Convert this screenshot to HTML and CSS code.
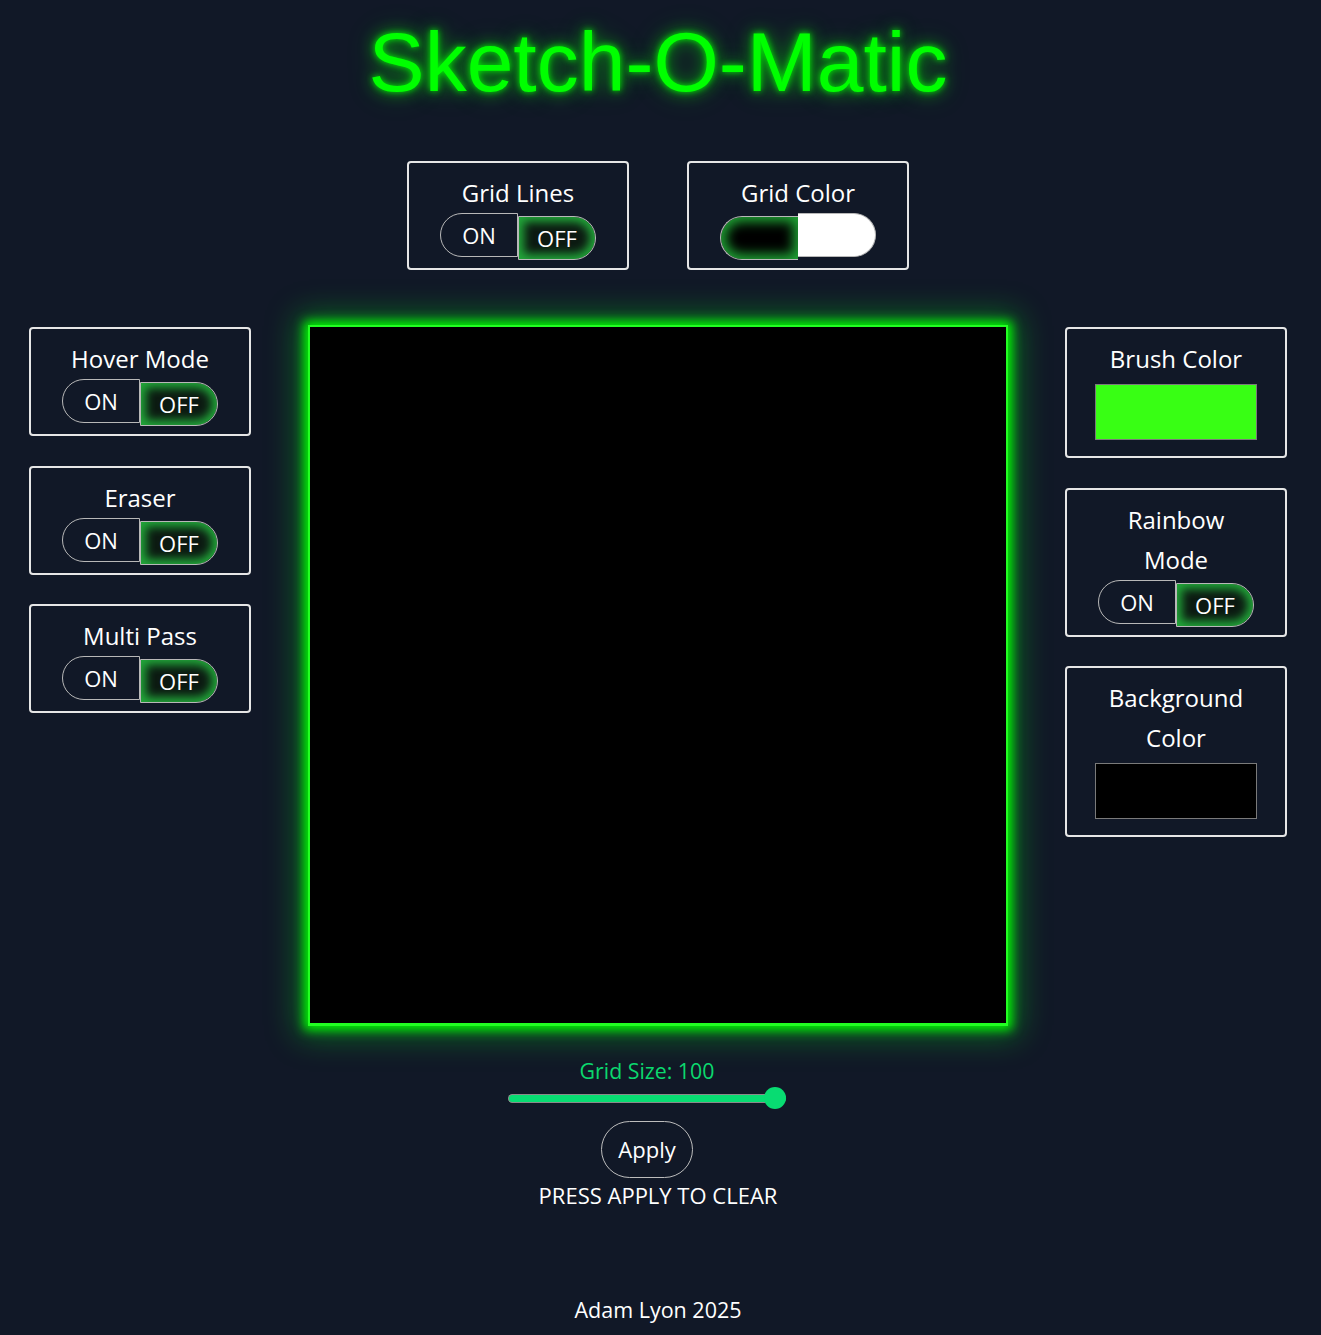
FILE: index.html
```html
<!DOCTYPE html>
<html lang="en">
<head>
<meta charset="utf-8">
<title>Sketch-O-Matic</title>
<link rel="stylesheet" href="styles.css">
</head>
<body>
  <h1 class="title">Sketch-O-Matic</h1>

  <div class="top-controls">
    <div class="panel">
      <div class="panel-title">Grid Lines</div>
      <div class="toggle">
        <div class="tbtn left">ON</div>
        <div class="tbtn right active">OFF</div>
      </div>
    </div>
    <div class="panel">
      <div class="panel-title">Grid Color</div>
      <div class="toggle">
        <div class="tbtn left active swatch-black"></div>
        <div class="tbtn right swatch-white"></div>
      </div>
    </div>
  </div>

  <div class="main">
    <div class="side-col">
      <div class="panel">
        <div class="panel-title">Hover Mode</div>
        <div class="toggle">
          <div class="tbtn left">ON</div>
          <div class="tbtn right active">OFF</div>
        </div>
      </div>
      <div class="panel">
        <div class="panel-title">Eraser</div>
        <div class="toggle">
          <div class="tbtn left">ON</div>
          <div class="tbtn right active">OFF</div>
        </div>
      </div>
      <div class="panel">
        <div class="panel-title">Multi Pass</div>
        <div class="toggle">
          <div class="tbtn left">ON</div>
          <div class="tbtn right active">OFF</div>
        </div>
      </div>
    </div>

    <div class="canvas"></div>

    <div class="side-col">
      <div class="panel">
        <div class="panel-title">Brush Color</div>
        <div class="color-swatch brush"></div>
      </div>
      <div class="panel">
        <div class="panel-title">Rainbow<br>Mode</div>
        <div class="toggle">
          <div class="tbtn left">ON</div>
          <div class="tbtn right active">OFF</div>
        </div>
      </div>
      <div class="panel">
        <div class="panel-title">Background<br>Color</div>
        <div class="color-swatch bg"></div>
      </div>
    </div>
  </div>

  <div class="controls">
    <div class="size-group">
      <div class="size-label">Grid Size: 100</div>
      <div class="slider">
        <div class="slider-track"></div>
        <div class="slider-thumb"></div>
      </div>
      <div class="apply-btn">Apply</div>
    </div>
    <div class="hint">PRESS APPLY TO CLEAR</div>
  </div>

  <footer class="footer">Adam Lyon 2025</footer>
</body>
</html>
```

FILE: styles.css
```css
* { box-sizing: border-box; }

html, body {
  margin: 0;
  background: #111827;
}

body {
  padding: 0 5px 0 0;
  font-family: "Open Sans", "Noto Sans", sans-serif;
  color: #ffffff;
  min-height: 1335px;
}

.title {
  margin: 0;
  padding-top: 14px;
  text-align: center;
  font-family: "Liberation Sans", Arial, sans-serif;
  font-weight: 400;
  font-size: 84px;
  line-height: 96px;
  color: #00ff00;
  text-shadow: 0 0 6px rgba(0, 255, 0, 0.9), 0 0 16px rgba(0, 255, 0, 0.6), 0 0 30px rgba(0, 255, 0, 0.3);
}

.top-controls {
  display: flex;
  justify-content: center;
  gap: 58px;
  margin-top: 51px;
}

.panel {
  width: 222px;
  border: 2px solid #e6e6e6;
  border-radius: 4px;
  background: #111827;
  padding: 10px 0 8px;
  display: flex;
  flex-direction: column;
  align-items: center;
}

.panel-title {
  font-size: 24px;
  line-height: 40px;
  text-align: center;
  color: #ffffff;
}

.toggle {
  display: flex;
  align-items: flex-start;
  height: 47px;
}

.tbtn {
  width: 78px;
  height: 44px;
  border: 1px solid #b8b8b8;
  font-size: 22px;
  line-height: 42px;
  text-align: center;
  color: #ffffff;
}

.tbtn.left {
  width: 78px;
  border-radius: 22px 0 0 22px;
}

.tbtn.right {
  border-radius: 0 22px 22px 0;
  border-left: none;
}

.tbtn.left.active {
  border-right: none;
}

.tbtn.left + .tbtn.right.active {
  border-left: 1px solid #b8b8b8;
}

.tbtn.active {
  margin-top: 3px;
  background: #0c1a12;
  box-shadow: inset 0 0 10px 5px #22a83a;
}

.tbtn.swatch-black {
  background: #000000;
  box-shadow: inset 0 0 12px 5px #1fa234;
  border-right: 1px solid #b8b8b8;
}

.tbtn.swatch-white {
  background: #ffffff;
  border-left: none;
}

.main {
  display: flex;
  justify-content: center;
  align-items: flex-start;
  gap: 57px;
  margin-top: 55px;
}

.side-col {
  width: 222px;
  display: flex;
  flex-direction: column;
  gap: 29.5px;
  margin-top: 2px;
}

.canvas {
  width: 700px;
  height: 701px;
  background: #000000;
  border: 2px solid #22ff22;
  border-bottom-width: 3px;
  box-shadow: 0 0 10px 4px rgba(0, 255, 0, 0.95), 0 0 30px 10px rgba(0, 230, 30, 0.4);
}

.color-swatch {
  width: 162px;
  height: 56px;
  margin-top: 5px;
  margin-bottom: 8px;
  border: 1px solid #7a7a7a;
}

.color-swatch.brush { background: #38ff14; }
.color-swatch.bg { background: #000000; }

.controls {
  display: flex;
  flex-direction: column;
  align-items: center;
  margin-top: 30px;
}

.size-group {
  display: flex;
  flex-direction: column;
  align-items: center;
  margin-right: 22px;
}

.size-label {
  font-size: 21.3px;
  line-height: 29px;
  color: #0bd86e;
}

.slider {
  position: relative;
  width: 278px;
  height: 22px;
  margin-top: 2px;
  display: flex;
  align-items: center;
}

.slider-track {
  width: 100%;
  height: 9px;
  border-radius: 5px;
  background: #08dc72;
  border: 1px solid #8a8a8a;
  border-right: none;
}

.slider-thumb {
  position: absolute;
  right: 0;
  top: 0;
  width: 22px;
  height: 22px;
  border-radius: 50%;
  background: #08dc72;
}

.apply-btn {
  margin-top: 12px;
  width: 92px;
  height: 57px;
  border: 1px solid #bdbdbd;
  border-radius: 29px;
  font-size: 22px;
  line-height: 55px;
  text-align: center;
  color: #ffffff;
}

.hint {
  margin-top: 2px;
  font-size: 22px;
  line-height: 30px;
  color: #ffffff;
}

.footer {
  margin-top: 85px;
  text-align: center;
  font-size: 21.5px;
  line-height: 30px;
  color: #ffffff;
}
```
